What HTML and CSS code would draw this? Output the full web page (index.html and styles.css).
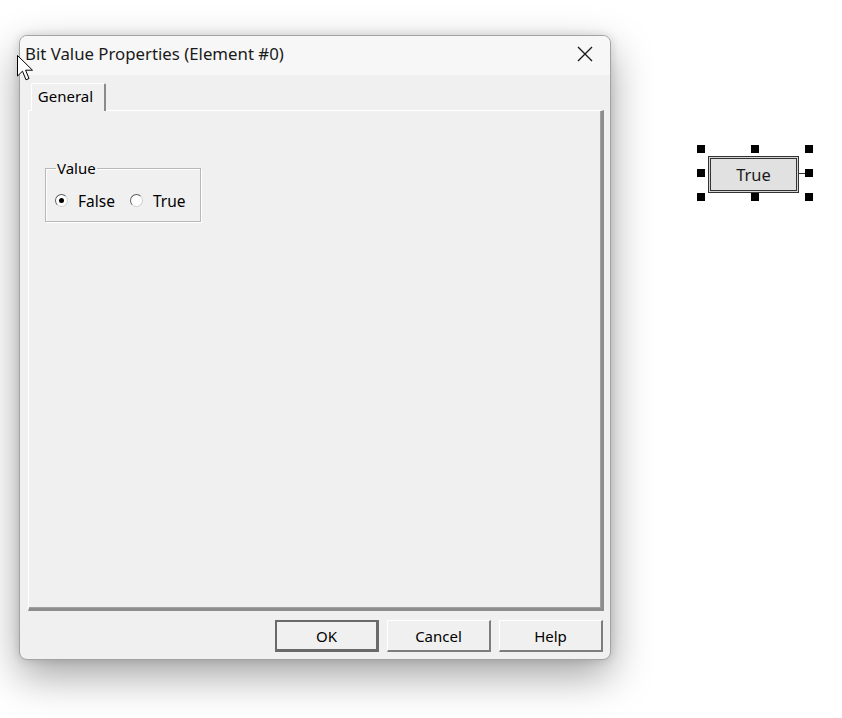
FILE: index.html
```html
<!DOCTYPE html>
<html lang="en">
<head>
<meta charset="UTF-8">
<title>Bit Value Properties</title>
<link rel="stylesheet" href="styles.css">
</head>
<body>
<div class="desk">
  <!-- Properties dialog -->
  <div class="dialog">
    <div class="titlebar">
      <span class="title">Bit Value Properties (Element #0)</span>
      <svg class="close" width="16" height="16" viewBox="0 0 16 16">
        <path d="M1 1 L15 15 M15 1 L1 15" stroke="#1a1a1a" stroke-width="1.4" fill="none"/>
      </svg>
    </div>
    <div class="dialog-body">
      <div class="tabs">
        <div class="tab">General</div>
      </div>
      <div class="panel">
        <fieldset class="group">
          <legend>Value</legend>
          <label class="radio"><span class="dot checked"></span>False</label>
          <label class="radio"><span class="dot"></span>True</label>
        </fieldset>
      </div>
      <div class="buttons">
        <button class="btn default">OK</button>
        <button class="btn">Cancel</button>
        <button class="btn">Help</button>
      </div>
    </div>
  </div>

  <!-- Selected element on the design surface -->
  <div class="element">
    <div class="element-btn">True</div>
    <span class="link"></span>
    <span class="handle h1"></span>
    <span class="handle h2"></span>
    <span class="handle h3"></span>
    <span class="handle h4"></span>
    <span class="handle h5"></span>
    <span class="handle h6"></span>
    <span class="handle h7"></span>
    <span class="handle h8"></span>
  </div>

  <!-- Mouse pointer -->
  <svg class="cursor" width="17" height="27" viewBox="0 0 17 27">
    <path d="M0.5 0.5 V21 L5.5 16.2 L9 24.8 L12 23.5 L8.6 15.2 L15.5 15.2 Z" fill="#fff" stroke="#000" stroke-width="1" stroke-linejoin="miter"/>
  </svg>
</div>
</body>
</html>
```

FILE: styles.css
```css
body {
    margin: 0;
    background: #ffffff;
    font-family: 'Noto Sans', 'Liberation Sans', sans-serif;
    color: #000;
}

.desk {
    position: relative;
    width: 842px;
    height: 718px;
    overflow: hidden;
    padding: 35px 0 0 19px;
    box-sizing: border-box;
}

/* Dialog window */
.dialog {
    width: 592px;
    height: 625px;
    box-sizing: border-box;
    border: 1px solid #a3a3a3;
    border-radius: 8px;
    background: #f0f0f0;
    box-shadow: 0 16px 42px rgba(0, 0, 0, 0.36), 0 0 10px rgba(0, 0, 0, 0.14);
    display: flex;
    flex-direction: column;
    overflow: hidden;
}

.titlebar {
    height: 39px;
    display: flex;
    align-items: center;
    justify-content: space-between;
    padding: 0 17px 0 5px;
    background: #f7f7f7;
}

.title {
    font-size: 16.8px;
    color: #1a1a1a;
    position: relative;
    top: -2px;
}

.close {
    position: relative;
    top: -2px;
}

.dialog-body {
    flex: 1;
    display: flex;
    flex-direction: column;
    padding: 8px 6px 7px 8px;
}

/* Tabs */
.tabs {
    display: flex;
    height: 27px;
    padding-left: 3px;
}

.tab {
    width: 75px;
    height: 28px;
    box-sizing: border-box;
    border-top: 1px solid #fff;
    border-left: 1px solid #fff;
    border-right: 2px solid #8a8a8a;
    border-radius: 2px 2px 0 0;
    background: #f0f0f0;
    font-size: 15px;
    text-align: center;
    line-height: 24px;
    padding-right: 5px;
    position: relative;
    z-index: 1;
}

.panel {
    height: 501px;
    box-sizing: border-box;
    border-top: 1px solid #fff;
    border-left: 1px solid #fff;
    border-right: 3px solid #8d8d8d;
    border-bottom: 3px solid #8d8d8d;
    box-shadow: inset -1px -1px 0 #a0a0a0;
    padding: 49px 0 0 16px;
}

.group {
    width: 156px;
    height: 62px;
    box-sizing: border-box;
    margin: 0;
    border: 1px solid #b8b8b8;
    box-shadow: 1px 1px 0 #fff, inset 1px 1px 0 #fff;
    padding: 6px 0 0 9px;
    display: flex;
    gap: 15px;
    align-items: center;
}

.group legend {
    font-size: 15px;
    padding: 0 1px;
    margin-left: 1px;
    line-height: 16px;
}

.radio {
    display: flex;
    align-items: center;
    gap: 10px;
    font-size: 15.5px;
    position: relative;
    top: -1px;
}

.dot {
    width: 13px;
    height: 13px;
    box-sizing: border-box;
    border-radius: 50%;
    border: 1px solid #5e5e5e;
    border-right-color: #cfcfcf;
    border-bottom-color: #cfcfcf;
    background: #fff;
    position: relative;
}

.dot.checked::after {
    content: '';
    position: absolute;
    left: 3px;
    top: 3px;
    width: 5px;
    height: 5px;
    border-radius: 50%;
    background: #000;
}

/* Buttons */
.buttons {
    display: flex;
    justify-content: flex-end;
    gap: 8px;
    margin-top: 9px;
    padding-right: 1px;
}

.btn {
    width: 104px;
    height: 32px;
    box-sizing: border-box;
    background: #f0f0f0;
    border: 1px solid #fff;
    border-right: 2px solid #7d7d7d;
    border-bottom: 2px solid #7d7d7d;
    font-family: 'Noto Sans', 'Liberation Sans', sans-serif;
    font-size: 15px;
    color: #000;
    padding: 0;
}

.btn.default {
    border: 2px solid #6a6a6a;
    border-right-width: 3px;
    border-bottom-width: 3px;
}

/* Element on design surface */
.element {
    position: absolute;
    left: 697px;
    top: 145px;
    width: 116px;
    height: 56px;
}

.element-btn {
    position: absolute;
    left: 11px;
    top: 11px;
    width: 91px;
    height: 37px;
    box-sizing: border-box;
    border: 1px solid #333;
    box-shadow: inset 0 0 0 1px #d6d6d6, inset 0 0 0 2px #333;
    background: #e1e1e1;
    font-size: 16.5px;
    text-align: center;
    line-height: 35px;
    color: #1a1a1a;
}

.link {
    position: absolute;
    left: 102px;
    top: 28px;
    width: 7px;
    height: 1px;
    background: #333;
}

.handle {
    position: absolute;
    width: 8px;
    height: 8px;
    background: #000;
}

.h1 { left: 0; top: 0; }
.h2 { left: 54px; top: 0; }
.h3 { left: 108px; top: 0; }
.h4 { left: 0; top: 24px; }
.h5 { left: 108px; top: 24px; }
.h6 { left: 0; top: 48px; }
.h7 { left: 54px; top: 48px; }
.h8 { left: 108px; top: 48px; }

.cursor {
    position: absolute;
    left: 17px;
    top: 55px;
}
```
